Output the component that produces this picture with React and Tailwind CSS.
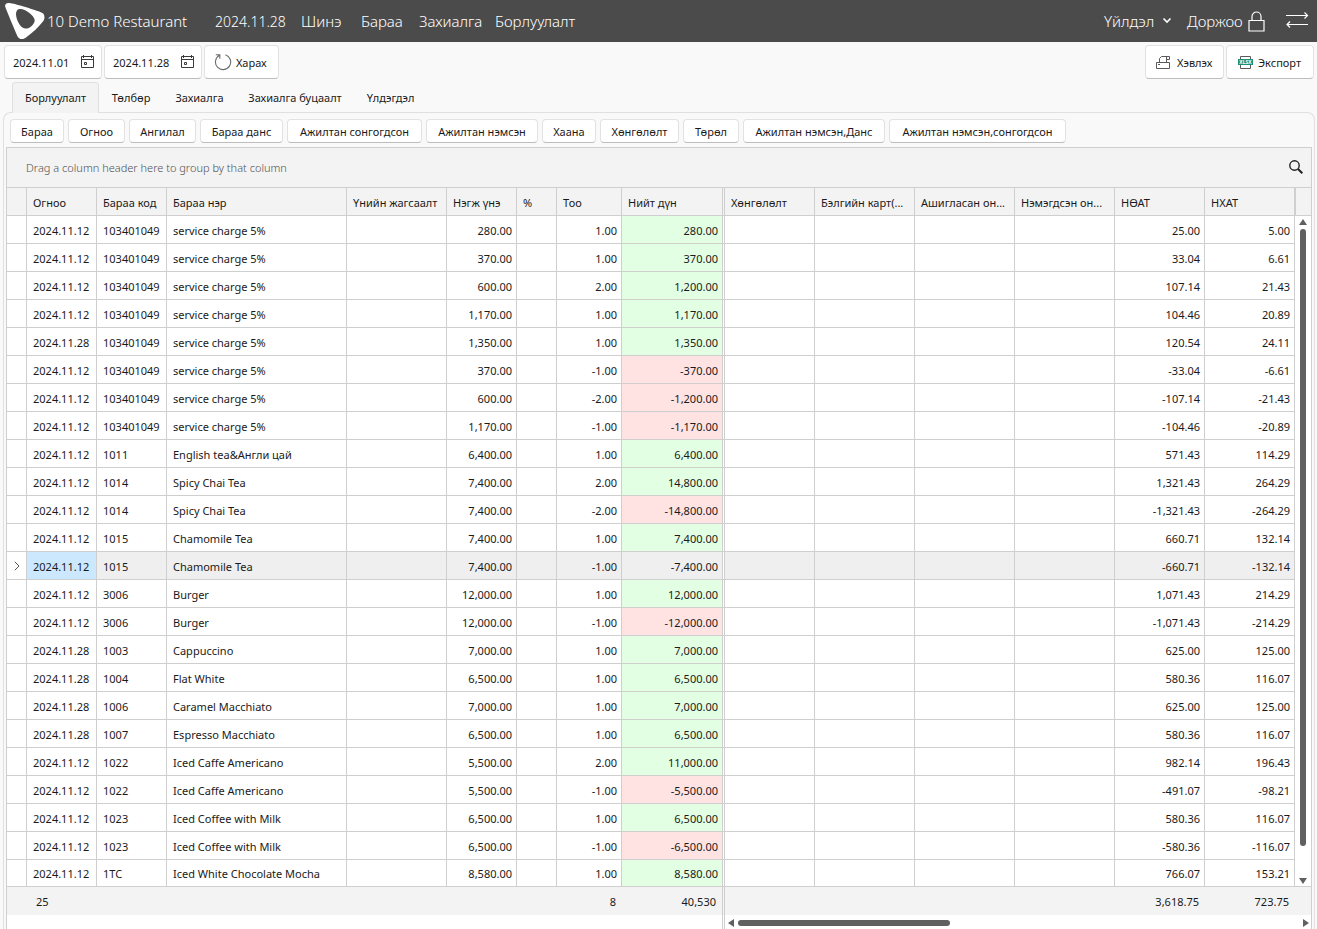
import React, { useState } from "react";

const menus = [
  { name: "2024.11.28", cls: "w-[86px] text-[14px]" },
  { name: "Шинэ", cls: "w-[60px]" },
  { name: "Бараа", cls: "w-[58px]" },
  { name: "Захиалга", cls: "w-[76px]" },
  { name: "Борлуулалт", cls: "w-[80px]" },
];

const tabs = [
  { name: "Борлуулалт", cls: "w-[87px]" },
  { name: "Төлбөр", cls: "w-[64px]" },
  { name: "Захиалга", cls: "w-[73px]" },
  { name: "Захиалга буцаалт", cls: "w-[118px]" },
  { name: "Үлдэгдэл", cls: "w-[73px]" },
];

const reports = [
  { name: "Бараа", cls: "w-[54px]" },
  { name: "Огноо", cls: "w-[57px]" },
  { name: "Ангилал", cls: "w-[67px]" },
  { name: "Бараа данс", cls: "w-[83px]" },
  { name: "Ажилтан сонгогдсон", cls: "w-[135px]" },
  { name: "Ажилтан нэмсэн", cls: "w-[112px]" },
  { name: "Хаана", cls: "w-[54px]" },
  { name: "Хөнгөлөлт", cls: "w-[79px]" },
  { name: "Төрөл", cls: "w-[56px]" },
  { name: "Ажилтан нэмсэн,Данс", cls: "w-[142px]" },
  { name: "Ажилтан нэмсэн,сонгогдсон", cls: "w-[177px]" },
];

const columns = [
  { name: "Огноо", width: "w-[70px]" },
  { name: "Бараа код", width: "w-[70px]" },
  { name: "Бараа нэр", width: "w-[180px]" },
  { name: "Үнийн жагсаалт", width: "w-[100px]" },
  { name: "Нэгж үнэ", width: "w-[70px]" },
  { name: "%", width: "w-[40px]" },
  { name: "Тоо", width: "w-[65px]" },
  { name: "Нийт дүн", width: "w-[103px]", frozen: true },
  { name: "Хөнгөлөлт", width: "w-[90px]" },
  { name: "Бэлгийн карт(...", width: "w-[100px]" },
  { name: "Ашигласан он...", width: "w-[100px]" },
  { name: "Нэмэгдсэн он...", width: "w-[100px]" },
  { name: "НӨАТ", width: "w-[90px]" },
  { name: "НХАТ", width: "w-auto" },
];

const rows = [
  ["2024.11.12", "103401049", "service charge 5%", "280.00", "1.00", "280.00", "25.00", "5.00"],
  ["2024.11.12", "103401049", "service charge 5%", "370.00", "1.00", "370.00", "33.04", "6.61"],
  ["2024.11.12", "103401049", "service charge 5%", "600.00", "2.00", "1,200.00", "107.14", "21.43"],
  ["2024.11.12", "103401049", "service charge 5%", "1,170.00", "1.00", "1,170.00", "104.46", "20.89"],
  ["2024.11.28", "103401049", "service charge 5%", "1,350.00", "1.00", "1,350.00", "120.54", "24.11"],
  ["2024.11.12", "103401049", "service charge 5%", "370.00", "-1.00", "-370.00", "-33.04", "-6.61"],
  ["2024.11.12", "103401049", "service charge 5%", "600.00", "-2.00", "-1,200.00", "-107.14", "-21.43"],
  ["2024.11.12", "103401049", "service charge 5%", "1,170.00", "-1.00", "-1,170.00", "-104.46", "-20.89"],
  ["2024.11.12", "1011", "English tea&Англи цай", "6,400.00", "1.00", "6,400.00", "571.43", "114.29"],
  ["2024.11.12", "1014", "Spicy Chai Tea", "7,400.00", "2.00", "14,800.00", "1,321.43", "264.29"],
  ["2024.11.12", "1014", "Spicy Chai Tea", "7,400.00", "-2.00", "-14,800.00", "-1,321.43", "-264.29"],
  ["2024.11.12", "1015", "Chamomile Tea", "7,400.00", "1.00", "7,400.00", "660.71", "132.14"],
  ["2024.11.12", "1015", "Chamomile Tea", "7,400.00", "-1.00", "-7,400.00", "-660.71", "-132.14"],
  ["2024.11.12", "3006", "Burger", "12,000.00", "1.00", "12,000.00", "1,071.43", "214.29"],
  ["2024.11.12", "3006", "Burger", "12,000.00", "-1.00", "-12,000.00", "-1,071.43", "-214.29"],
  ["2024.11.28", "1003", "Cappuccino", "7,000.00", "1.00", "7,000.00", "625.00", "125.00"],
  ["2024.11.28", "1004", "Flat White", "6,500.00", "1.00", "6,500.00", "580.36", "116.07"],
  ["2024.11.28", "1006", "Caramel Macchiato", "7,000.00", "1.00", "7,000.00", "625.00", "125.00"],
  ["2024.11.28", "1007", "Espresso Macchiato", "6,500.00", "1.00", "6,500.00", "580.36", "116.07"],
  ["2024.11.12", "1022", "Iced Caffe Americano", "5,500.00", "2.00", "11,000.00", "982.14", "196.43"],
  ["2024.11.12", "1022", "Iced Caffe Americano", "5,500.00", "-1.00", "-5,500.00", "-491.07", "-98.21"],
  ["2024.11.12", "1023", "Iced Coffee with Milk", "6,500.00", "1.00", "6,500.00", "580.36", "116.07"],
  ["2024.11.12", "1023", "Iced Coffee with Milk", "6,500.00", "-1.00", "-6,500.00", "-580.36", "-116.07"],
  ["2024.11.12", "1TC", "Iced White Chocolate Mocha", "8,580.00", "1.00", "8,580.00", "766.07", "153.21"],
];

const boxCls = "rounded border border-[#e2e2e2] border-b-[#bdbdbd] bg-white";
const cellCls = "h-7 border-r border-b border-[#cfcfcf] pt-[3px] pb-0 whitespace-nowrap overflow-hidden";
const frozenCls = "border-r-3 [border-right-style:double] bg-clip-padding";

function Logo() {
  return (
    <svg width="40" height="37" viewBox="2 3 120 111" fill="#fff">
      <path
        fillRule="evenodd"
        d="M2 12C2 6 8 2 16 3C28 4 98 25 113 32C122 36 122 50 117 57C103 76 83 93 66 106C57 114 43 113 39 102C28 76 8 30 2 12ZM45 21C32 23 33 43 41 59C48 75 61 82 71 79C82 75 92 62 91 54C89 38 59 18 45 21Z"
      />
    </svg>
  );
}

function CalendarIcon() {
  return (
    <svg width="13" height="14" viewBox="0 0 13 14" fill="none" stroke="#3a3a3a" className="shrink-0">
      <path d="M.5 1.5h12v11H.5zM.5 4.500h12M2.500 0v3M10.500 0v3" />
      <path d="M3.500 7.500h2v2h-2z" />
    </svg>
  );
}

function DateBox({ label, value }) {
  const [date, setDate] = useState(value);
  return (
    <div className={`flex h-[34px] w-[98px] items-center justify-between pr-[7px] pl-2 ${boxCls}`}>
      <input
        type="text"
        aria-label={label}
        value={date}
        onChange={(e) => setDate(e.target.value)}
        className="h-6 w-[66px] bg-transparent pt-px outline-none"
      />
      <CalendarIcon />
    </div>
  );
}

function TopBar() {
  return (
    <header className="flex h-[42px] items-center justify-between bg-[#4b4b4b] pr-2 pl-[5px] text-[15px] font-light text-white">
      <div className="flex items-center">
        <Logo />
        <span className="w-[170px] pl-0.5 whitespace-nowrap">10 Demo Restaurant</span>
        <nav className="flex items-center">
          {menus.map((m) => (
            <a key={m.name} href="#" className={`whitespace-nowrap ${m.cls}`}>{m.name}</a>
          ))}
        </nav>
      </div>
      <div className="flex items-center">
        <button type="button" className="flex w-[83px] items-center gap-2">
          Үйлдэл
          <svg width="10" height="8" viewBox="0 0 10 8" fill="none" stroke="#fff" strokeWidth="1.6">
            <path d="M1.5 1.5L5 5L8.5 1.5" />
          </svg>
        </button>
        <button type="button" className="flex w-[99px] items-center gap-[5px]">
          Доржоо
          <svg width="17" height="21" viewBox="0 0 17 21" fill="none" stroke="#fff" strokeWidth="1.2">
            <path d="M1 9.5h15v10.5H1zM4 9.5V5.5a4.5 4.5 0 0 1 9 0v4" />
          </svg>
        </button>
        <button type="button" aria-label="Солих" className="pb-1">
          <svg width="23" height="17" viewBox="0 0 23 17" fill="none" stroke="#fff" strokeWidth="1.2">
            <path d="M0 4.500h21.500M18.500 1.500L21.500 4.500L18.500 7.500M22 13.500H1M4 10.500L1 13.500L4 16.500" />
          </svg>
        </button>
      </div>
    </header>
  );
}

function Toolbar() {
  return (
    <div className="flex justify-between pt-[3px] pr-[3px] pl-1">
      <div className="flex gap-0.5">
        <DateBox label="Эхлэх огноо" value="2024.11.01" />
        <DateBox label="Дуусах огноо" value="2024.11.28" />
        <button type="button" className={`flex h-[34px] w-[75px] items-center gap-1 pl-[9px] ${boxCls}`}>
          <svg width="18" height="18" viewBox="0 0 18 18" fill="none" stroke="#6a6a6a" strokeWidth="1.1" className="shrink-0">
            <path d="M5.500 2.300A7.600 7.600 0 1 0 11.500 1.800M1.800 1.800H5.800V5.800" />
          </svg>
          <span className="pt-0.5">Харах</span>
        </button>
      </div>
      <div className="flex gap-0.5">
        <button type="button" className={`flex h-[34px] w-[79px] items-center gap-1.5 pl-2.5 ${boxCls}`}>
          <svg width="15" height="15" viewBox="0 0 15 15" fill="none" stroke="#5a5a5a" className="shrink-0">
            <path d="M.5 7.500h13v6H.5zM3.500 7.500v-4l2-2h8M10.500 7.500v-6M13.500 1.500v3h-3M2 9.500h2" />
          </svg>
          <span className="pt-0.5">Хэвлэх</span>
        </button>
        <button type="button" className={`flex h-[34px] w-[88px] items-center gap-1 pl-[11px] ${boxCls}`}>
          <svg width="16" height="15" viewBox="0 0 16 15" className="shrink-0">
            <path d="M2.500 4V1.500h10V4M2.500 9v4.500h10V9" fill="none" stroke="#5a5a5a" />
            <rect x="0" y="4" width="15" height="6" fill="#1e9277" />
            <text x="7.500" y="9" textAnchor="middle" fontSize="5" fontWeight="700" fill="#fff">XLSX</text>
          </svg>
          <span className="pt-0.5">Экспорт</span>
        </button>
      </div>
    </div>
  );
}

function Grid() {
  const [selected, setSelected] = useState(12);

  const totalBg = (value, active) => {
    if (active) return "bg-[#efefef]";
    return value.startsWith("-") ? "bg-[#ffe3e3]" : "bg-[#e3ffe3]";
  };

  return (
    <div className="border-x border-t border-[#cfcfcf] bg-white">
      {/* group panel */}
      <div className="flex h-10 items-center justify-between border-b border-[#cfcfcf] bg-[#f3f3f3] pr-2 pl-[19px] text-[#505050]">
        <span className="pt-0.5 font-light">Drag a column header here to group by that column</span>
        <button type="button" aria-label="Search" className="pb-0.5">
          <svg width="14" height="14" viewBox="0 0 14 14" fill="none" stroke="#222">
            <circle cx="5.500" cy="5.500" r="4.700" strokeWidth="1.400" />
            <path d="M9 9L13.300 13.300" strokeWidth="2" />
          </svg>
        </button>
      </div>

      <div className="flex">
        <table className="w-full min-w-0 flex-1 table-fixed border-separate border-spacing-0">
          <thead>
            <tr className="bg-[#f3f3f3]">
              <th className={`w-5 ${cellCls}`}></th>
              {columns.map((c) => (
                <th key={c.name} className={`pr-0 pl-1.5 text-left font-normal ${cellCls} ${c.width} ${c.frozen ? frozenCls : ""}`}>
                  {c.name}
                </th>
              ))}
            </tr>
          </thead>
          <tbody>
            {rows.map((r, i) => {
              const active = i === selected;
              const bg = active ? "bg-[#efefef]" : "bg-white";
              const num = `pr-1 pl-0 text-right ${cellCls} ${bg}`;
              const text = `pr-0 pl-1.5 ${cellCls}`;
              return (
                <tr key={i} onClick={() => setSelected(i)} className="last:*:h-[27px]">
                  <td className={`px-0 ${cellCls}`}>
                    {active && (
                      <svg width="6" height="10" viewBox="0 0 6 10" fill="none" stroke="#555" className="mx-auto mb-0.5">
                        <path d="M.8 .8L5 5L.8 9.200" />
                      </svg>
                    )}
                  </td>
                  <td className={`${text} ${active ? "bg-[#cce8ff]" : "bg-white"}`}>{r[0]}</td>
                  <td className={`${text} ${bg}`}>{r[1]}</td>
                  <td className={`${text} ${bg}`}>{r[2]}</td>
                  <td className={`${text} ${bg}`}></td>
                  <td className={num}>{r[3]}</td>
                  <td className={num}></td>
                  <td className={num}>{r[4]}</td>
                  <td className={`pr-1 pl-0 text-right ${cellCls} ${frozenCls} ${totalBg(r[5], active)}`}>{r[5]}</td>
                  <td className={num}></td>
                  <td className={num}></td>
                  <td className={num}></td>
                  <td className={num}></td>
                  <td className={num}>{r[6]}</td>
                  <td className={num}>{r[7]}</td>
                </tr>
              );
            })}
          </tbody>
          <tfoot>
            <tr className="bg-[#f3f3f3] text-right *:pt-[3px]">
              <td className="h-7"></td>
              <td className="pl-[9px] text-left">25</td>
              <td colSpan="5"></td>
              <td className="pr-1.5">8</td>
              <td className={`border-[#cfcfcf] pr-1.5 ${frozenCls}`}>40,530</td>
              <td colSpan="4"></td>
              <td className="pr-1.5">3,618.75</td>
              <td className="pr-1.5">723.75</td>
            </tr>
          </tfoot>
        </table>

        {/* vertical scroll */}
        <div className="flex w-4 shrink-0 flex-col">
          <div className="h-7 border-b border-l border-[#cfcfcf] bg-[#f3f3f3]"></div>
          <div className="flex flex-1 flex-col items-center gap-1 border-b border-[#cfcfcf] pt-[3px] pb-0.5">
            <svg width="8" height="6" viewBox="0 0 8 6" fill="#606060"><path d="M4 0L8 6H0z" /></svg>
            <div className="w-1.5 flex-1 rounded-full bg-[#606060]"></div>
            <div className="h-6"></div>
            <svg width="8" height="6" viewBox="0 0 8 6" fill="#606060"><path d="M0 0H8L4 6z" /></svg>
          </div>
          <div className="h-7 bg-[#f3f3f3]"></div>
        </div>
      </div>

      {/* horizontal scroll */}
      <div className="flex h-3.5">
        <div className={`w-[718px] shrink-0 border-[#cfcfcf] ${frozenCls}`}></div>
        <div className="flex flex-1 items-center gap-1 pt-0.5 pr-0.5 pl-[3px]">
          <svg width="6" height="8" viewBox="0 0 6 8" fill="#606060"><path d="M6 0V8L0 4z" /></svg>
          <div className="h-1.5 w-[212px] rounded-full bg-[#606060]"></div>
          <svg width="6" height="8" viewBox="0 0 6 8" fill="#606060" className="ml-auto"><path d="M0 0L6 4L0 8z" /></svg>
        </div>
      </div>
    </div>
  );
}

function App() {
  const [tab, setTab] = useState("Борлуулалт");

  return (
    <div className="min-h-screen bg-[#f9f9f9] font-['Noto_Sans',sans-serif] text-[11px] text-[#1a1a1a]">
      <TopBar />
      <Toolbar />

      <div className="flex pt-[3px] pl-3">
        {tabs.map((t) => (
          <button
            key={t.name}
            type="button"
            onClick={() => setTab(t.name)}
            className={`relative -mb-px h-[31px] rounded-t border border-b-0 whitespace-nowrap ${t.cls} ${
              tab === t.name ? "border-[#e0e0e0] bg-[#f3f3f3]" : "border-transparent"
            }`}
          >
            {t.name}
          </button>
        ))}
      </div>

      <main className="mr-0.5 ml-[3px] rounded-t-lg border border-b-0 border-[#e0e0e0] px-0.5 pt-1.5">
        <div className="flex gap-1 pb-1 pl-1">
          {reports.map((r) => (
            <button key={r.name} type="button" className={`h-6 shrink-0 pt-0.5 whitespace-nowrap ${r.cls} ${boxCls}`}>
              {r.name}
            </button>
          ))}
        </div>
        <Grid />
      </main>
    </div>
  );
}

export default App;
